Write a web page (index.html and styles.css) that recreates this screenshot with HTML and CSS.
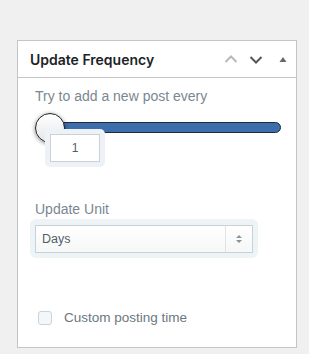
FILE: index.html
```html
<!DOCTYPE html>
<html>
<head>
<meta charset="utf-8">
<link rel="stylesheet" href="styles.css">
</head>
<body>
<div class="panel">
  <div class="panel-head">
    <h2 class="title">Update Frequency</h2>
    <div class="actions">
      <svg class="ico ico-up" width="14" height="10" viewBox="0 0 14 10"><path d="M1.5 8 L7 2.5 L12.5 8" fill="none" stroke="currentColor" stroke-width="2"/></svg>
      <svg class="ico ico-down" width="14" height="10" viewBox="0 0 14 10"><path d="M1.5 2 L7 7.5 L12.5 2" fill="none" stroke="currentColor" stroke-width="2"/></svg>
      <svg class="ico ico-tri" width="8" height="7" viewBox="0 0 8 7"><path d="M0.5 6 L4 1 L7.5 6 Z" fill="currentColor"/></svg>
    </div>
  </div>
  <div class="panel-body">
    <div class="label">Try to add a new post every</div>
    <div class="slider">
      <div class="track"></div>
      <div class="thumb"></div>
      <div class="bubble"><div class="bubble-input">1</div></div>
    </div>
    <div class="label unit-label">Update Unit</div>
    <div class="select-halo">
      <div class="select">
        <span class="select-value">Days</span>
        <span class="select-arrows">
          <svg width="8" height="12" viewBox="0 0 8 12"><path d="M1 5 L4 2 L7 5 Z M1 7 L4 10 L7 7 Z" fill="#8a949c"/></svg>
        </span>
      </div>
    </div>
    <label class="check-row">
      <span class="checkbox"></span>
      <span class="check-text">Custom posting time</span>
    </label>
  </div>
</div>
</body>
</html>
```

FILE: styles.css
```css
html, body {
  margin: 0;
  padding: 0;
}
body {
  background: #f0f0f1;
  font-family: "Liberation Sans", Arial, sans-serif;
  width: 309px;
  height: 354px;
  overflow: hidden;
}
.panel {
  box-sizing: border-box;
  margin: 40px 0 0 17px;
  width: 280px;
  height: 308px;
  background: #fff;
  border: 1px solid #c3c4c7;
}
.panel-head {
  display: flex;
  align-items: center;
  height: 36px;
  border-bottom: 1px solid #c3c4c7;
  padding: 0 9px 0 12px;
}
.title {
  margin: 0;
  flex: 1;
  font-family: Inter, "Liberation Sans", sans-serif;
  font-weight: 600;
  font-size: 14px;
  color: #1d2327;
}
.actions {
  display: flex;
  align-items: center;
  gap: 11px;
}
.ico { display: block; }
.ico-up { color: #b4b9be; }
.ico-down { color: #50575e; margin-top: 1px; }
.ico-tri { color: #646970; margin-left: 5px; }
.panel-body {
  padding: 8px 17px 0 17px;
}
.label {
  font-size: 14px;
  line-height: 20px;
  color: #7a8791;
}
.slider {
  position: relative;
  height: 21px;
  padding-top: 9px;
  margin-top: 7px;
}
.track {
  box-sizing: border-box;
  margin-left: 15px;
  width: 231px;
  height: 11px;
  background: #3b6eab;
  border: 1px solid #1f2a36;
  border-radius: 6px;
}
.thumb {
  position: absolute;
  left: 0;
  top: 0;
  box-sizing: border-box;
  width: 30px;
  height: 30px;
  border-radius: 50%;
  border: 1.5px solid #1e1e1e;
  background: linear-gradient(#ffffff, #e4e6ea);
  box-shadow: 0 1px 4px rgba(0,0,0,0.45);
}
.bubble {
  position: absolute;
  left: 10px;
  top: 16px;
  box-sizing: border-box;
  width: 60px;
  height: 38px;
  padding: 5px;
  background: #eef2f6;
  border-radius: 5px;
}
.bubble-input {
  box-sizing: border-box;
  height: 28px;
  background: #fff;
  border: 1px solid #c9d2d8;
  font-size: 12px;
  color: #555d66;
  display: flex;
  align-items: center;
  justify-content: center;
}
.unit-label {
  margin-top: 56px;
}
.select-halo {
  box-sizing: border-box;
  margin-top: 0;
  margin-left: -5px;
  width: 228px;
  height: 39px;
  padding: 6px 5px 5px 5px;
  background: #eef3f6;
  border-radius: 6px;
}
.select {
  box-sizing: border-box;
  display: flex;
  height: 28px;
  background: linear-gradient(#ffffff, #f6f7f7);
  border: 1px solid #c9d2d8;
}
.select-value {
  flex: 1;
  display: flex;
  align-items: center;
  padding-left: 6px;
  font-size: 12.5px;
  color: #555d66;
}
.select-arrows {
  width: 26px;
  border-left: 1px solid #dfe4e7;
  display: flex;
  align-items: center;
  justify-content: center;
}
.select-arrows svg { display: block; }
.check-row {
  display: flex;
  align-items: center;
  margin-top: 50px;
  margin-left: 3px;
}
.checkbox {
  box-sizing: border-box;
  width: 14px;
  height: 14px;
  border: 1px solid #c8d3dc;
  border-radius: 3px;
  background: #f4f7f9;
}
.check-text {
  margin-left: 12px;
  font-size: 13.5px;
  color: #6b7780;
  line-height: 20px;
}
```
